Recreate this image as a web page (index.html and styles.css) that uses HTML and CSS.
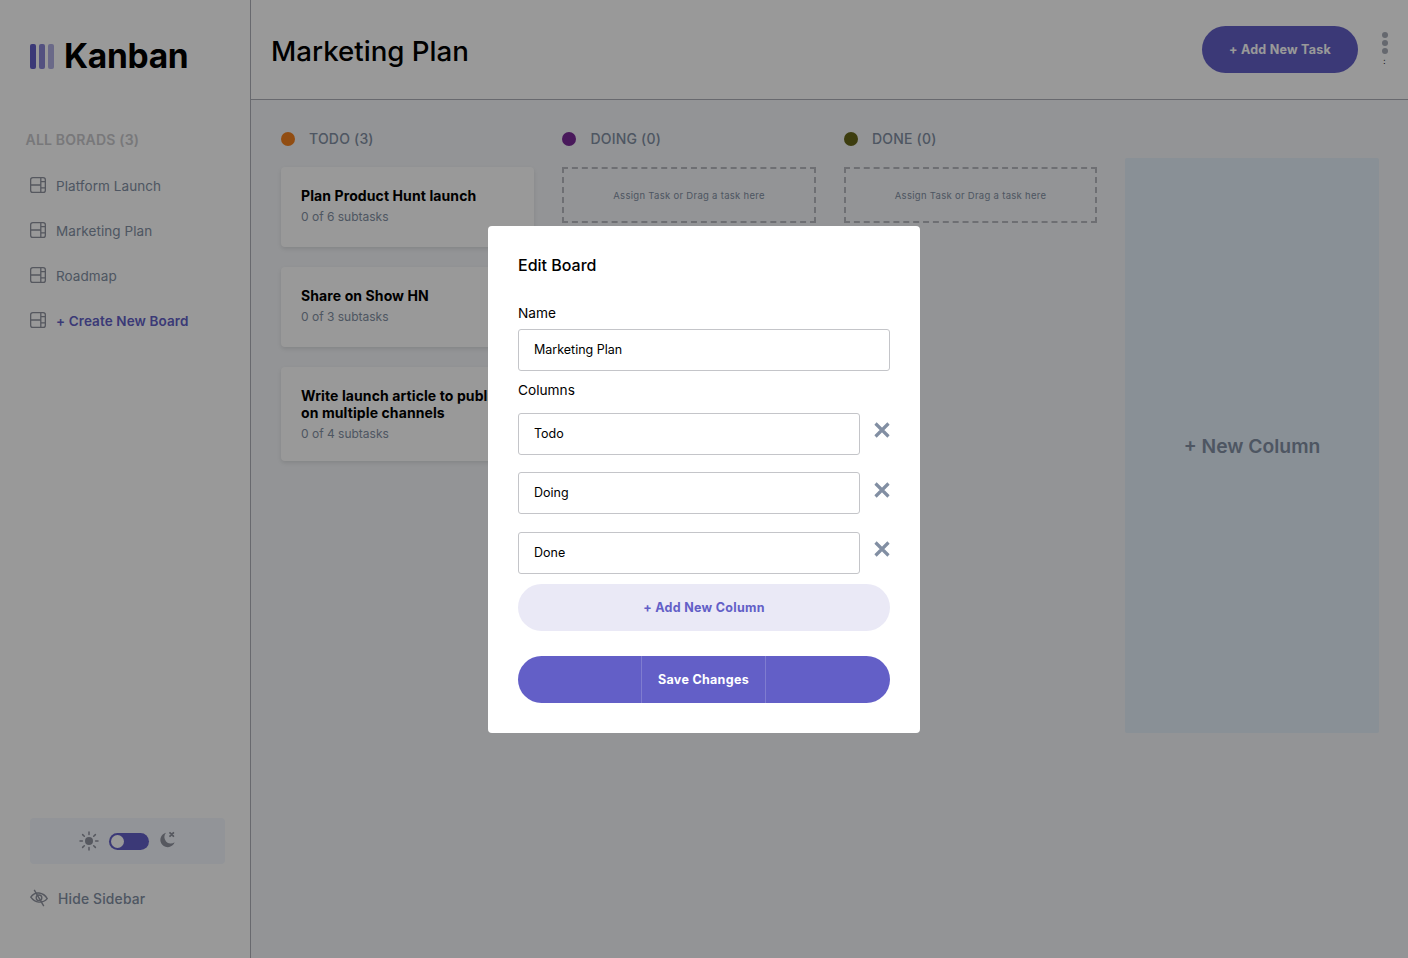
FILE: index.html
```html
<!DOCTYPE html>
<html>
<head lang="en">
    <meta charset="utf-8">
    <title>Kanban</title>
    <link rel="stylesheet" href="styles.css">
</head>
<body>

<div class="app">
    <aside class="sidebar">
        <div class="logo">
            <span class="logo-bars"><i></i><i></i><i></i></span>
            <span class="logo-text">Kanban</span>
        </div>

        <h4 class="boards-title">ALL BORADS (3)</h4>
        <ul class="boards">
            <li><svg class="board-icon" viewBox="0 0 16 16"><use href="#board"/></svg>Platform Launch</li>
            <li><svg class="board-icon" viewBox="0 0 16 16"><use href="#board"/></svg>Marketing Plan</li>
            <li><svg class="board-icon" viewBox="0 0 16 16"><use href="#board"/></svg>Roadmap</li>
            <li class="create"><svg class="board-icon" viewBox="0 0 16 16"><use href="#board"/></svg>+ Create New Board</li>
        </ul>

        <div class="sidebar-bottom">
            <div class="theme">
                <svg class="sun" viewBox="0 0 20 20">
                    <circle cx="10" cy="10" r="4" fill="#8f939f"/>
                    <path d="M10 1v2.4M10 16.6V19M1 10h2.4M16.6 10H19M3.6 3.6l1.7 1.7M14.7 14.7l1.7 1.700M3.600 16.400l1.700-1.700M14.700 5.300l1.700-1.700" stroke="#8f939f" stroke-width="1.5" stroke-linecap="round"/>
                </svg>
                <span class="toggle"><i></i></span>
                <svg class="moon" viewBox="0 0 18 18">
                    <path d="M8 1.800a7.300 7.300 0 1 0 8.600 9.400A6.400 6.400 0 0 1 8 1.800z" fill="#8f939f"/>
                    <path d="M12 1.800l3.400 3.400M15.400 1.800L12 5.200" stroke="#8f939f" stroke-width="1.800" stroke-linecap="round"/>
                </svg>
            </div>
            <div class="hide-sidebar">
                <svg class="eye" viewBox="0 0 18 18" fill="none" stroke="#8f939f" stroke-width="1.400">
                    <path d="M0.800 8.200C3 4.800 5.800 3.600 9 4s6.200 2 8.200 5.600c-2.400 2.800-5.200 3.800-8.400 3.500S3 11.200 0.800 8.200z"/>
                    <circle cx="9" cy="8.800" r="2.800"/>
                    <path d="M4.200 0.800l9.600 16.400"/>
                </svg>
                Hide Sidebar
            </div>
        </div>
    </aside>

    <main class="main">
        <header class="topbar">
            <h1>Marketing Plan</h1>
            <div class="topbar-right">
                <button class="add-task">+ Add New Task</button>
                <div class="menu-dots"><i></i><i></i><i></i><b>:</b></div>
            </div>
        </header>

        <section class="board">
            <div class="column">
                <div class="col-head"><span class="dot orange"></span>TODO (3)</div>
                <div class="card">
                    <h3>Plan Product Hunt launch</h3>
                    <p>0 of 6 subtasks</p>
                </div>
                <div class="card">
                    <h3>Share on Show HN</h3>
                    <p>0 of 3 subtasks</p>
                </div>
                <div class="card">
                    <h3>Write launch article to publish on multiple channels</h3>
                    <p>0 of 4 subtasks</p>
                </div>
            </div>
            <div class="column">
                <div class="col-head"><span class="dot purple"></span>DOING (0)</div>
                <div class="empty">Assign Task or Drag a task here</div>
            </div>
            <div class="column">
                <div class="col-head"><span class="dot olive"></span>DONE (0)</div>
                <div class="empty">Assign Task or Drag a task here</div>
            </div>
            <div class="new-column">+ New Column</div>
        </section>
    </main>
</div>

<div class="overlay">
    <form class="modal">
        <h2>Edit Board</h2>
        <label class="name-label">Name</label>
        <input class="field" value="Marketing Plan">
        <label class="columns-label">Columns</label>
        <div class="col-rows">
            <div class="col-row">
                <input class="field" value="Todo">
                <svg class="remove" viewBox="0 0 16 16"><use href="#cross"/></svg>
            </div>
            <div class="col-row">
                <input class="field" value="Doing">
                <svg class="remove" viewBox="0 0 16 16"><use href="#cross"/></svg>
            </div>
            <div class="col-row">
                <input class="field" value="Done">
                <svg class="remove" viewBox="0 0 16 16"><use href="#cross"/></svg>
            </div>
        </div>
        <button type="button" class="add-column">+ Add New Column</button>
        <div class="save">
            <span class="save-inner">Save Changes</span>
        </div>
    </form>
</div>

<svg class="defs" width="0" height="0">
    <symbol id="board" viewBox="0 0 16 16">
        <rect x="0.650" y="0.650" width="14.700" height="14.700" rx="2.200" fill="none" stroke="#8f939f" stroke-width="1.300"/>
        <path d="M0.600 8h10.200M10.800 0.600v14.800M10.800 4.600h4.600M10.800 10.800h4.600" fill="none" stroke="#8f939f" stroke-width="1.300"/>
    </symbol>
    <symbol id="cross" viewBox="0 0 16 16">
        <path d="M1.500 1.500l13 13M14.500 1.500l-13 13" stroke="#828fa3" stroke-width="3.200"/>
    </symbol>
</svg>

</body>
</html>
```

FILE: styles.css
```css
* { box-sizing: border-box; }

body {
    margin: 0;
    font-family: Inter, 'Noto Sans', sans-serif;
    background: #f5f7fa;
    color: #000;
    overflow: hidden;
}

h1, h2, h3, h4, p, ul { margin: 0; padding: 0; }

.defs { position: absolute; }

.app {
    display: flex;
    height: 958px;
}

/* sidebar */
.sidebar {
    width: 251px;
    flex-shrink: 0;
    background: #fff;
    border-right: 1px solid #aeb0b8;
    display: flex;
    flex-direction: column;
    padding: 0 25px 0 30px;
}

.logo {
    display: flex;
    align-items: center;
    margin-top: 37px;
    height: 38px;
}

.logo-bars {
    display: flex;
    gap: 3px;
    margin-right: 10px;
}

.logo-bars i {
    width: 6px;
    height: 25px;
    border-radius: 2px;
    background: #635fc7;
}

.logo-bars i:nth-child(2) { opacity: 0.75; }
.logo-bars i:nth-child(3) { opacity: 0.5; }

.logo-text {
    font-size: 33.500px;
    font-weight: 700;
    letter-spacing: -0.3px;
}

.boards-title {
    margin: 56px 0 0 -4.500px;
    font-size: 14px;
    line-height: 18px;
    font-weight: 600;
    letter-spacing: 0.2px;
    color: #c8c8cc;
}

.boards {
    list-style: none;
    margin-top: 14px;
}

.boards li {
    display: flex;
    align-items: center;
    height: 45px;
    font-size: 13.500px;
    letter-spacing: 0.07px;
    color: #828fa3;
}

.board-icon {
    width: 16px;
    height: 16px;
    margin: -2px 10px 0 0;
}

.boards .create {
    color: #635fc7;
    font-weight: 600;
    letter-spacing: 0.1px;
}

.sidebar-bottom {
    margin-top: auto;
    margin-bottom: 51px;
}

.theme {
    display: flex;
    align-items: center;
    justify-content: center;
    gap: 10px;
    height: 46px;
    border-radius: 4px;
    background: #f4f7fd;
}

.sun { width: 20px; height: 20px; }
.moon { width: 18px; height: 18px; margin: -2px 0 0 -1px; }

.toggle {
    width: 40px;
    height: 17px;
    border-radius: 9px;
    background: #635fc7;
    padding: 2px;
    display: block;
}

.toggle i {
    display: block;
    width: 13px;
    height: 13px;
    border-radius: 50%;
    background: #fff;
}

.hide-sidebar {
    display: flex;
    align-items: center;
    margin-top: 27px;
    font-size: 13.800px;
    font-weight: 500;
    letter-spacing: 0.2px;
    color: #828fa3;
}

.eye {
    width: 18px;
    height: 18px;
    margin: -3px 10px 0 0;
}

/* main */
.main {
    flex: 1;
    min-width: 0;
}

.topbar {
    height: 100px;
    background: #fff;
    border-bottom: 1px solid #aeb0b8;
    display: flex;
    justify-content: space-between;
    padding: 26px 0 0 20px;
}

.topbar h1 {
    font-size: 27.700px;
    line-height: 50px;
    font-weight: 500;
}

.topbar-right {
    display: flex;
    align-items: flex-start;
}

.add-task {
    width: 156px;
    height: 47px;
    padding-bottom: 2px;
    border: 0;
    border-radius: 24px;
    background: #635fc7;
    color: #fff;
    font: 700 12.500px Inter, sans-serif;
    letter-spacing: 0.25px;
}

.menu-dots {
    width: 50px;
    padding: 6px 0 0 4px;
    display: flex;
    flex-direction: column;
    align-items: center;
    gap: 2px;
}

.menu-dots i {
    width: 6px;
    height: 6px;
    border-radius: 50%;
    background: #a9adb8;
}

.menu-dots b {
    font: 400 8px/10px Inter, sans-serif;
    margin-left: -1px;
}

.board {
    display: grid;
    grid-template-columns: repeat(4, 253.200px);
    column-gap: 28.300px;
    align-items: start;
    padding: 30px 0 0 30px;
}

.col-head {
    display: flex;
    align-items: center;
    height: 18px;
    padding-bottom: 1px;
    margin-bottom: 19px;
    font-size: 14px;
    font-weight: 500;
    letter-spacing: 0.2px;
    color: #828fa3;
}

.dot {
    width: 14px;
    height: 14px;
    border-radius: 50%;
    margin: 1px 14px 0 0;
}

.orange { background: #f2801f; }
.purple { background: #7a2a98; }
.olive { background: #66661a; }

.card {
    background: #fff;
    border-radius: 4px;
    padding: 20px;
    min-height: 80px;
    margin-bottom: 20px;
    box-shadow: 0 2px 4px rgba(0, 0, 0, 0.1);
}

.card h3 {
    font-size: 14px;
    line-height: 17px;
    font-weight: 700;
    letter-spacing: 0.1px;
}

.card p {
    margin-top: 5px;
    font-size: 12px;
    line-height: 15px;
    color: #828fa3;
}

.empty {
    height: 56px;
    border: 2px dashed #b8bac0;
    display: flex;
    align-items: center;
    justify-content: center;
    font-size: 9.500px;
    letter-spacing: 0.3px;
    color: #828fa3;
}

.new-column {
    margin-top: 28px;
    height: 575px;
    border-radius: 2px;
    background: #e4f0fb;
    display: flex;
    align-items: center;
    justify-content: center;
    font-size: 19.300px;
    font-weight: 600;
    color: #828fa3;
}

/* modal */
.overlay {
    position: fixed;
    inset: 0;
    background: rgba(0, 0, 0, 0.4);
    display: flex;
    align-items: center;
    justify-content: center;
}

.modal {
    width: 432px;
    height: 507px;
    background: #fff;
    border-radius: 4px;
    padding: 30px;
    display: flex;
    flex-direction: column;
    font-size: 13.700px;
}

.modal h2 {
    font-size: 16px;
    line-height: 18px;
    font-weight: 500;
}

.name-label {
    margin-top: 30px;
    line-height: 18px;
}

.field {
    display: block;
    width: 100%;
    height: 42px;
    margin-top: 7px;
    padding: 0 15px 1px;
    border: 1px solid #c4c5c9;
    border-radius: 3px;
    font: 400 12.500px Inter, sans-serif;
    color: #000;
    background: #fff;
}

.columns-label {
    margin-top: 10px;
    line-height: 18px;
}

.col-rows {
    display: flex;
    flex-direction: column;
    gap: 17.500px;
    margin-top: 14px;
}

.col-row {
    display: flex;
    align-items: center;
    justify-content: space-between;
}

.col-row .field {
    width: 342px;
    margin-top: 0;
}

.remove {
    width: 16px;
    height: 16px;
    margin-top: -7px;
}

.add-column {
    height: 47px;
    margin-top: 10px;
    border: 0;
    border-radius: 24px;
    background: #eae9f6;
    color: #635fc7;
    font: 700 12.500px Inter, sans-serif;
    letter-spacing: 0.3px;
}

.save {
    height: 47px;
    margin-top: 25px;
    border-radius: 24px;
    background: #635fc7;
    display: flex;
    justify-content: center;
}

.save-inner {
    width: 125px;
    margin-left: -1px;
    display: flex;
    align-items: center;
    justify-content: center;
    border-left: 1px solid #7f7cd0;
    border-right: 1px solid #7f7cd0;
    color: #fff;
    font-size: 12.500px;
    font-weight: 700;
    letter-spacing: 0.3px;
}
```
